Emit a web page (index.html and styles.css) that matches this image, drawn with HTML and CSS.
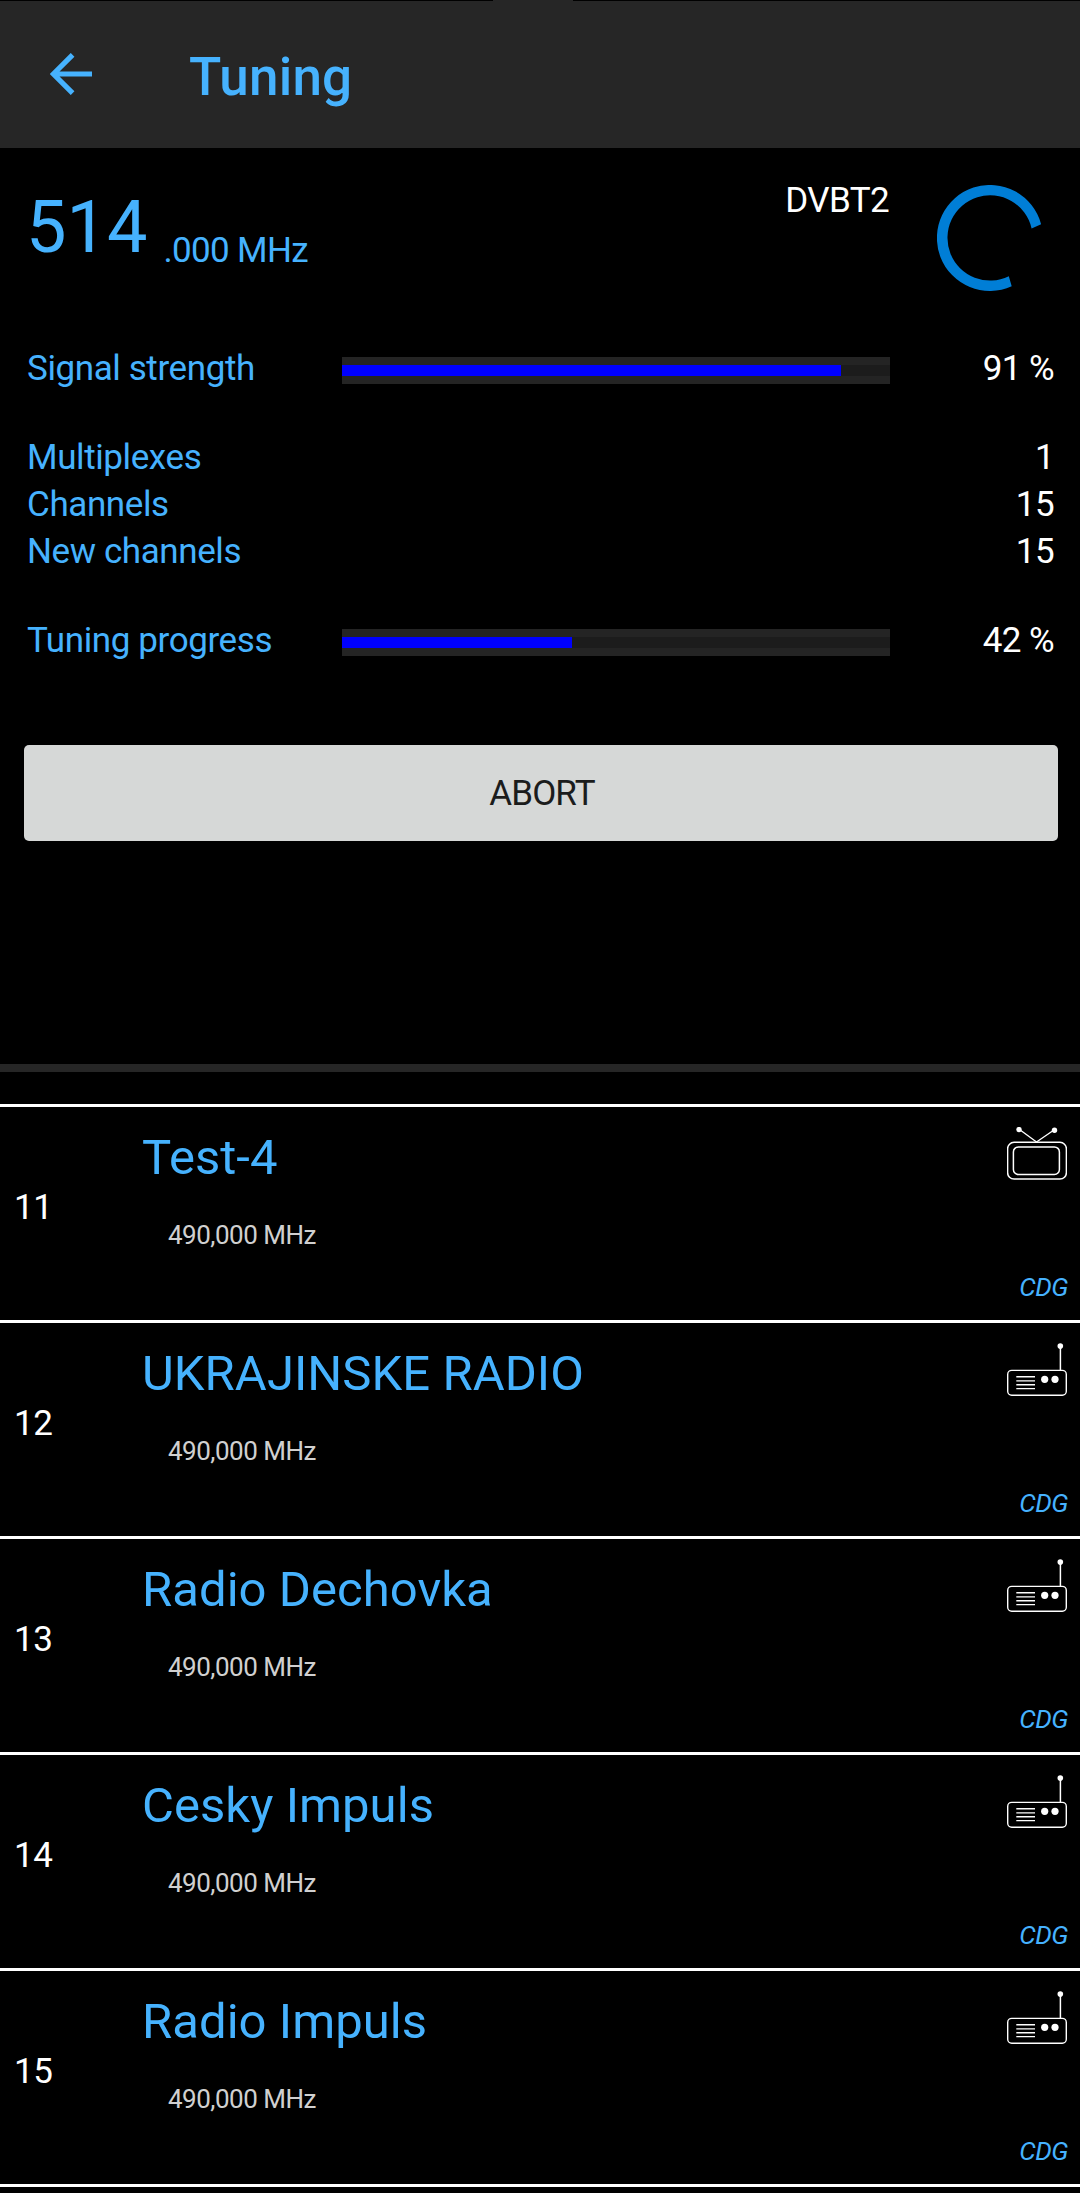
FILE: index.html
```html
<!DOCTYPE html>
<html lang="en">
<head>
<meta charset="utf-8">
<title>Tuning</title>
<link rel="stylesheet" href="styles.css">
</head>
<body>
<svg class="defs" aria-hidden="true">
  <symbol id="tv" viewBox="0 0 60 53" fill="none" stroke="#fff">
    <path d="M12.5 2.5 29.5 15 47 3" stroke-width="1.4"/>
    <circle cx="12" cy="2.6" r="2.7" fill="#fff" stroke="none"/>
    <circle cx="47.5" cy="3.2" r="2.7" fill="#fff" stroke="none"/>
    <rect x=".6" y="15.3" width="58.8" height="36.8" rx="6.5" stroke-width="1.5"/>
    <rect x="6.4" y="19.9" width="46" height="27.6" rx="5" stroke-width="1.5"/>
  </symbol>
  <symbol id="radio" viewBox="0 0 60 53" fill="none" stroke="#fff">
    <path d="M53.4 3v24" stroke-width="1.5"/>
    <circle cx="53.3" cy="3.1" r="2.8" fill="#fff" stroke="none"/>
    <rect x=".7" y="27.4" width="58.6" height="24.8" rx="4" stroke-width="1.4"/>
    <path d="M9.3 33.8h18.7M9.3 37.9h18.7M9.3 41.7h18.7M9.3 45.6h18.7" stroke-width="1.4"/>
    <circle cx="37.7" cy="36.3" r="3.6" fill="#fff" stroke="none"/>
    <circle cx="48" cy="36.3" r="3.6" fill="#fff" stroke="none"/>
  </symbol>
</svg>
<header class="bar">
  <svg class="back" viewBox="0 0 42 42" fill="none" stroke="#46b2fe" stroke-width="5.2"><path d="M42 21H4M22.6 1.8 3.4 21 22.6 40.2"/></svg>
  <h1 class="title">Tuning</h1>
</header>
<main class="panel">
  <section class="freq">
    <span class="freq-main">514</span>
    <span class="freq-rest">.000 MHz</span>
    <span class="system">DVBT2</span>
    <svg class="spinner" viewBox="0 0 106 106"><path fill="#007ed6" d="M104.1 39.2A53 53 0 1 0 74.7 101.3L71.8 91.2A42.6 42.6 0 1 1 94.6 43.4Z"/></svg>
  </section>
  <section class="stats">
    <div class="stat"><span>Signal strength</span><div class="track"><div class="fill" style="width:91%"></div></div><span class="value">91 %</span></div>
    <div class="counts">
      <div class="stat"><span>Multiplexes</span><span class="value">1</span></div>
      <div class="stat"><span>Channels</span><span class="value">15</span></div>
      <div class="stat"><span>New channels</span><span class="value">15</span></div>
    </div>
    <div class="stat"><span>Tuning progress</span><div class="track"><div class="fill" style="width:42%"></div></div><span class="value">42 %</span></div>
  </section>
  <button class="abort">ABORT</button>
</main>
<ul class="channels">
  <li class="channel"><span class="num">11</span><div class="info"><span class="name">Test-4</span><span class="mhz">490,000 MHz</span></div><div class="side"><svg class="icon"><use href="#tv"/></svg><em class="net">CDG</em></div></li>
  <li class="channel"><span class="num">12</span><div class="info"><span class="name">UKRAJINSKE RADIO</span><span class="mhz">490,000 MHz</span></div><div class="side"><svg class="icon"><use href="#radio"/></svg><em class="net">CDG</em></div></li>
  <li class="channel"><span class="num">13</span><div class="info"><span class="name">Radio Dechovka</span><span class="mhz">490,000 MHz</span></div><div class="side"><svg class="icon"><use href="#radio"/></svg><em class="net">CDG</em></div></li>
  <li class="channel"><span class="num">14</span><div class="info"><span class="name">Cesky Impuls</span><span class="mhz">490,000 MHz</span></div><div class="side"><svg class="icon"><use href="#radio"/></svg><em class="net">CDG</em></div></li>
  <li class="channel"><span class="num">15</span><div class="info"><span class="name">Radio Impuls</span><span class="mhz">490,000 MHz</span></div><div class="side"><svg class="icon"><use href="#radio"/></svg><em class="net">CDG</em></div></li>
</ul>
</body>
</html>
```
FILE: styles.css
```css
* { box-sizing: border-box; }
body {
  margin: 0;
  height: 2193px;
  overflow: hidden;
  background: #000;
  color: #46b2fe;
  font: 35px/47px Roboto, sans-serif;
  letter-spacing: -0.4px;
}
.defs { display: none; }

.bar {
  height: 148px;
  display: flex;
  padding: 0 0 0 50px;
  background:
    linear-gradient(90deg, #000 493px, #262626 493px 573px, #000 573px) top / 100% 1px no-repeat,
    #262626;
}
.back { width: 42px; height: 42px; margin-top: 53px; }
.title { margin: 46px 0 0 97px; font-size: 53px; line-height: 62px; font-weight: 500; letter-spacing: 0.2px; }

.panel {
  height: 916px;
  display: flex;
  flex-direction: column;
}
.freq { height: 193px; display: flex; padding: 0 37px 0 26px; }
.freq-main { margin-top: 38px; font-size: 72px; line-height: 84px; letter-spacing: 0; }
.freq-rest { margin: 79px 0 0 16px; letter-spacing: -0.65px; }
.system { margin: 29px 48px 0 auto; color: #fff; letter-spacing: -0.6px; }
.spinner { width: 106px; height: 106px; margin-top: 37px; }

.stats { padding: 4px 26px 0 27px; }
.stat { display: flex; height: 47px; }
.stat > span:first-child { width: 315px; }
.value { margin-left: auto; color: #fff; letter-spacing: -0.6px; }
.counts { margin: 42px 0; }
.track {
  width: 548px;
  height: 27px;
  margin-top: 12px;
  padding: 8px 0;
  background: linear-gradient(#242424 8px, #1c1c1c 8px 19px, #242424 19px);
}
.fill { height: 11px; background: #00f; }

.abort {
  height: 96px;
  margin: 81px 22px 0 24px;
  padding: 1px 0 0 2px;
  border: 0;
  border-radius: 5px;
  background: #d6d8d7;
  color: #1b1c1c;
  font: 35px/47px Roboto, sans-serif;
  letter-spacing: -0.9px;
}

.channels {
  margin: 0;
  padding: 32px 0 0;
  border-top: 8px solid #262626;
  list-style: none;
}
.channel { display: flex; height: 216px; border-top: 3px solid #fff; padding-left: 14px; }
.channel:last-child { height: 219px; border-bottom: 3px solid #fff; }
.num { width: 128px; margin-top: 77px; color: #fff; }
.info { display: flex; flex-direction: column; }
.name { margin-top: 22px; font-size: 49px; line-height: 58px; letter-spacing: 0.05px; }
.mhz { margin: 33px 0 0 26px; font-size: 26px; line-height: 31px; color: #d0d0d0; letter-spacing: -0.5px; }
.side {
  display: flex;
  flex-direction: column;
  align-items: flex-end;
  margin-left: auto;
  padding: 20px 13px 0 0;
}
.icon { width: 60px; height: 53px; }
.net { margin: 92px -1px 0 0; font-size: 26px; line-height: 31px; letter-spacing: -0.5px; }
```
